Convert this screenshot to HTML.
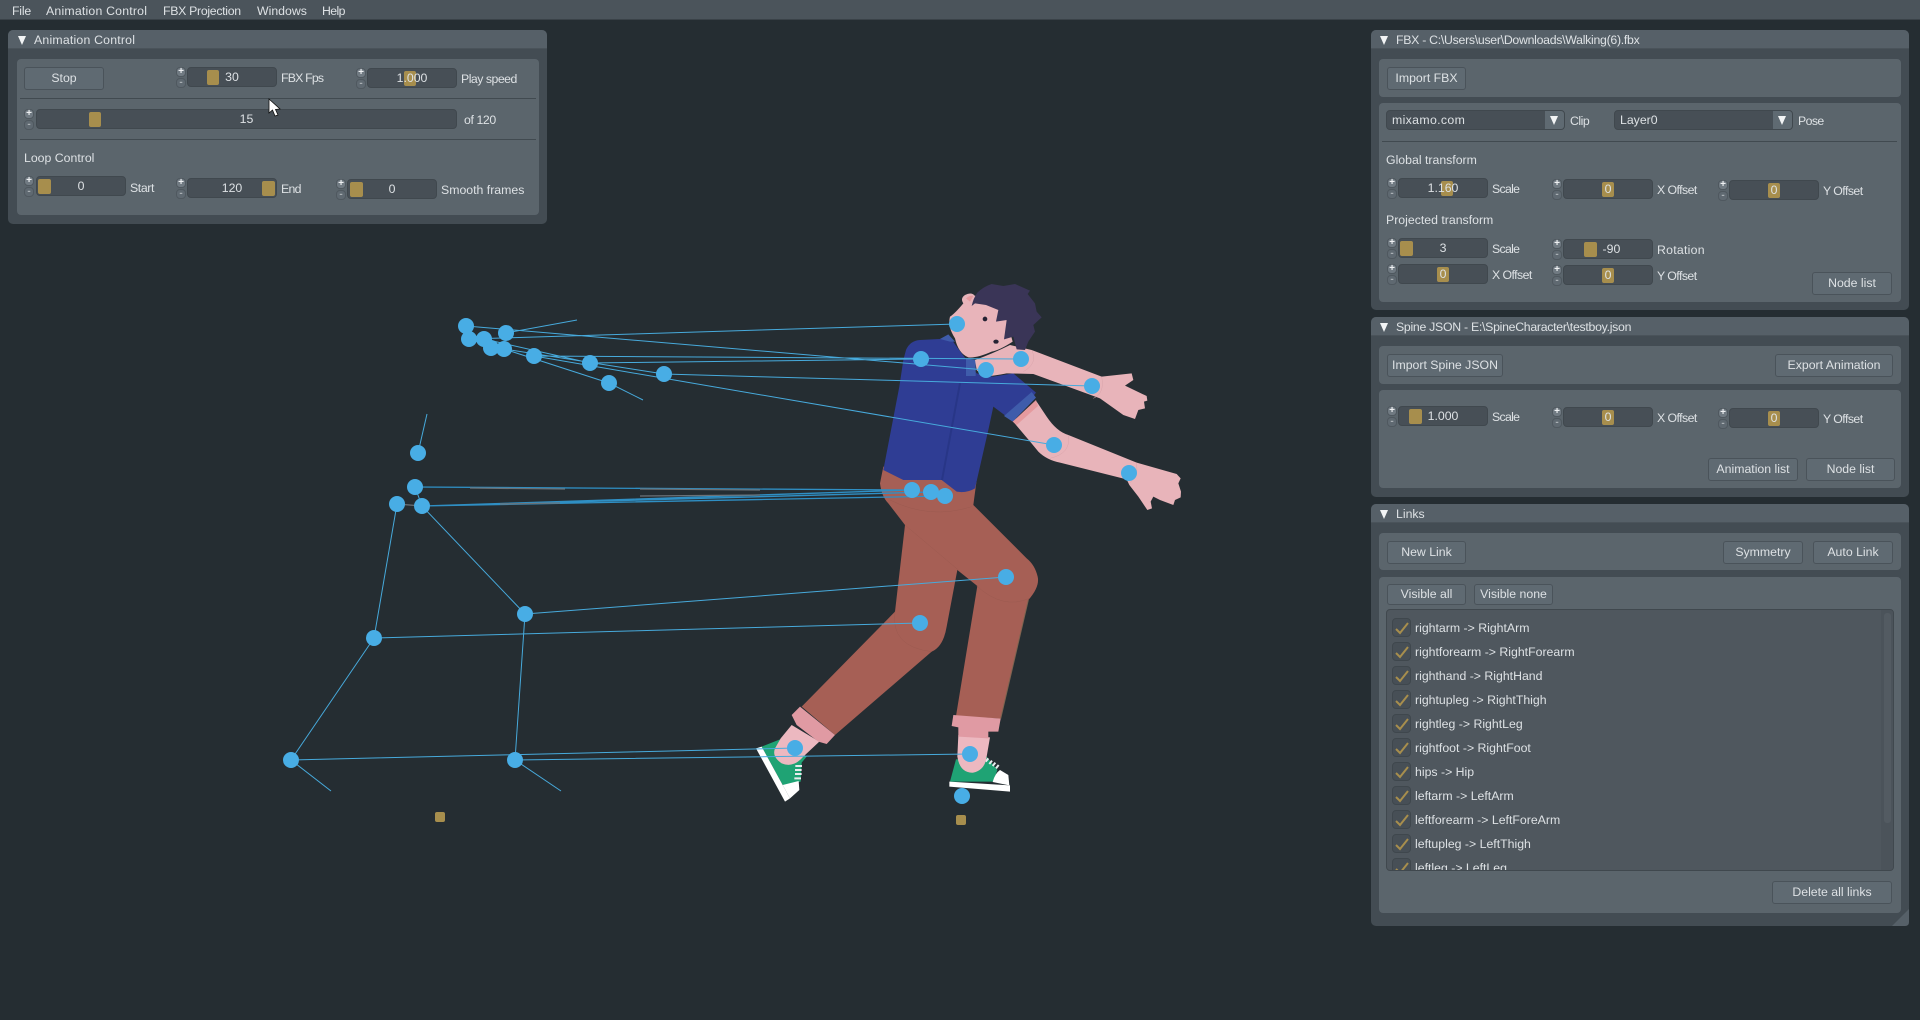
<!DOCTYPE html>
<html><head><meta charset="utf-8"><title>Animation Tool</title>
<style>
html,body{margin:0;padding:0;width:1920px;height:1020px;overflow:hidden;background:#252d32;font-family:"Liberation Sans",sans-serif;font-size:12.3px;color:#dde1e4}
#root{position:absolute;left:0;top:0;width:1920px;height:1020px;overflow:hidden;filter:blur(.35px)}
svg.scene{position:absolute;left:0;top:0}
.a{position:absolute}
.menu{left:0;top:0;width:1920px;height:20px;background:#4b545b;border-bottom:1px solid #3a4248;box-sizing:border-box}
.m{position:absolute;top:3px;line-height:16px;white-space:nowrap}
.win{position:absolute;background:#434c53;border-radius:5px}
.tb{position:absolute;left:0;top:0;right:0;height:19px;background:#566068;border-radius:5px 5px 0 0;border-bottom:1px solid #4a535a;box-sizing:border-box}
.tb span{position:absolute;top:2px;line-height:16px;white-space:nowrap}
.tri{position:absolute;width:0;height:0;border-left:4.7px solid transparent;border-right:4.7px solid transparent;border-top:9px solid #f2f4f5}
.grp{position:absolute;background:#5b656c;border-radius:4px}
.b{position:absolute;box-sizing:border-box;background:#5f6a72;border:1px solid #4a535a;border-radius:3px;text-align:center;line-height:21px;height:23px;white-space:nowrap}
.sp{position:absolute;width:101px;height:20px}
.sp i{position:absolute;left:0;width:10px;height:10px;box-sizing:border-box;background:#707a82;border:1px solid #4f585f;border-radius:4px;font:bold 10px/8px "Liberation Sans",sans-serif;text-align:center;color:#eef0f2}
.sp i.pl{top:0}.sp i.mi{top:11px;background:#5f6971;color:#a9afb4}
.fd{position:absolute;left:11px;top:0;width:90px;height:20px;box-sizing:border-box;background:#474f56;border:1px solid #40484e;border-radius:4px;text-align:center;line-height:18px}
.fd b{position:absolute;top:2px;width:12px;height:15px;background:#a78e4d;border-radius:2px}
.fd span{position:relative}
.l{position:absolute;line-height:16px;white-space:nowrap}
.sep{position:absolute;height:1px;background:#414a50}
.cb{position:absolute;left:5px;width:19px;height:19px;box-sizing:border-box;background:#474f56;border:1px solid #3f474d;border-radius:4px}
.cb svg{position:absolute;left:1px;top:1px}
.r{position:absolute;left:28px;line-height:16px;white-space:nowrap}
</style></head><body><div id="root">

<svg class="scene" width="1920" height="1020" viewBox="0 0 1920 1020">
 <!-- character lower body -->
 <g transform="translate(740 480) scale(.33333)">
  <path fill="#a65f55" d="M430,-40 L420,10 Q425,50 445,70 L495,135 L465,395 L185,680 L285,765 L575,515 Q610,500 620,440 L652,270 L712,318 L648,708 L782,716 L865,360 Q900,320 893,290 Q885,255 860,235 L700,75 L710,0 L705,-40Z"/>
  <path fill="none" stroke="#9c5a50" stroke-width="1.5" d="M450,60 Q570,120 695,80 M495,135 L655,270 M710,318 Q790,390 868,355 M465,395 Q450,500 575,515"/>
  <path fill="none" stroke="#7e6450" stroke-width="3" d="M865,360 L782,716"/>
  <path fill="#1fa374" d="M65,800 L120,778 L200,830 L185,848 L182,905 L130,918Z"/>
  <path fill="#fff" d="M48,805 L65,800 L150,955 L135,965Z"/>
  <path fill="#fff" d="M128,915 L176,903 L178,930 L150,955Z"/>
  <path stroke="#e8ecee" stroke-width="6" d="M166,858h20M165,870h20M165,882h20M163,895h20"/>
  <path fill="#ecb8c0" d="M122,775 L155,735 L238,785 L190,830 Q160,865 125,850 Q95,830 105,805Z"/>
  <path fill="#e09aa3" d="M155,705 L180,680 L285,765 L260,792 L235,785 L170,735Z"/>
  <path fill="#1fa374" d="M648,838 L740,830 L772,870 L760,905 L630,905Z"/>
  <path fill="#fff" d="M628,905 L810,916 L810,935 L628,920Z"/>
  <path fill="#fff" d="M758,906 Q765,880 780,870 L805,885 L808,916Z"/>
  <path stroke="#e8ecee" stroke-width="6" d="M737,845l8,-10M748,852l8,-10M758,858l8,-10M768,865l8,-10"/>
  <path fill="#ecb8c0" d="M655,765 L750,772 L740,830 Q735,870 700,878 Q660,880 652,830Z"/>
  <path fill="#e09aa3" d="M640,705 L782,716 L775,755 L745,755 L745,775 L655,770 L655,742 L635,738Z"/>
 </g>
 <!-- character upper body -->
 <g transform="translate(860 270) scale(.33333)">
  <path fill="#e8b4ba" d="M462,458 L530,395 L560,440 Q590,485 625,495 L830,578 L950,612 L962,625 L955,640 L963,665 L962,682 L945,690 L940,705 L900,690 L880,680 L872,695 L876,715 L862,720 L835,680 L808,645 L800,628 L600,578 Q560,570 535,545 Q515,520 462,458Z"/>
  <path fill="#2f3d94" d="M138,240 Q150,212 180,210 L240,207 L265,195 L290,230 L350,310 L400,320 L460,310 L528,368 L460,455 L400,410 L385,480 L345,655 Q320,670 290,665 L245,630 L130,630 L70,600 L95,470 L118,350 L130,270Z"/>
  <path fill="#3f5cab" d="M432,438 L515,366 L528,383 L458,455Z"/>
  <path fill="#e59a9e" d="M458,455 L528,390 L534,408 L470,465Z"/>
  <path fill="none" stroke="#283687" stroke-width="6" d="M300,340 L246,630"/>
  <path fill="#3f5cab" d="M318,265 L347,270 L347,318 L318,318Z"/>
  <path fill="#3f5cab" d="M240,207 L265,193 L285,215 L270,215Z"/>
  <path fill="#e8b4ba" d="M345,270 Q400,250 450,225 L515,240 L725,320 L815,310 L820,330 L795,347 L860,378 L862,392 L852,395 L855,415 L835,420 L825,447 L790,435 L720,385 L520,312 L440,310 Q400,318 370,320 L350,300Z"/>
  <path fill="#e8b4ba" d="M270,140 Q285,130 310,100 Q300,85 315,75 Q335,65 345,78 Q370,60 400,60 L440,150 L458,215 Q420,240 395,245 Q350,265 325,262 Q295,250 285,205 Q262,170 270,140Z"/>
  <path fill="#e59a9e" d="M318,85 Q330,75 340,78 L330,95Z"/>
  <path fill="#3a3557" d="M335,108 Q340,85 352,68 Q370,50 395,42 L430,48 L465,42 L510,62 L503,72 L525,100 L530,125 L545,142 L520,165 L525,185 L505,215 L495,240 L470,238 L460,200 L432,208 L440,150 L408,155 L415,120 L378,105 L345,100Z"/>
  <ellipse cx="375" cy="147" rx="7" ry="7" fill="#252233"/>
  <ellipse cx="408" cy="215" rx="8" ry="6" fill="#252233"/>
  <path fill="none" stroke="#d9a4ab" stroke-width="1.5" d="M515,240 Q535,280 490,305 M625,495 Q635,550 570,565 M725,320 Q735,370 700,385 M830,578 Q835,620 810,638"/>
 </g>
 <!-- skeleton lines -->
 <g stroke="#47aadc" stroke-width="1" fill="none">
  <path d="M418,453L427,414M422,506L525,614M397,504L374,638M374,638L291,760M525,614L515,760M291,760L331,791M515,760L561,791M415,487L422,506"/>
  <path d="M374,638L920,623M525,614L1006,577M291,760L795,748M515,760L970,754"/>
  <path d="M466,326L986,370M469,339L957,324M506,333L577,320M534,356L1021,359M590,363L921,359M664,374L1092,386M534,356L1054,445M504,349L664,374M504,349L609,383M609,383L643,400M484,339L590,363"/>
  <path stroke-width="1.3" stroke="#2f8fc4" d="M415,487L912,490M422,506L912,490M422,506L945,496M422,506L931,492"/>
 </g>
 <path stroke="#6b7278" stroke-width="1.3" d="M397,504L422,506M470,488L565,489M640,489L760,490M500,504L560,503M640,496L760,495"/>
 <!-- joints -->
 <g fill="#48ade5">
  <circle cx="466" cy="326" r="8"/><circle cx="469" cy="339" r="8"/><circle cx="484" cy="339" r="8"/><circle cx="491" cy="348" r="8"/><circle cx="504" cy="349" r="8"/><circle cx="506" cy="333" r="8"/><circle cx="534" cy="356" r="8"/><circle cx="590" cy="363" r="8"/><circle cx="609" cy="383" r="8"/><circle cx="664" cy="374" r="8"/>
  <circle cx="957" cy="324" r="8"/><circle cx="921" cy="359" r="8"/><circle cx="1021" cy="359" r="8"/><circle cx="986" cy="370" r="8"/><circle cx="1092" cy="386" r="8"/><circle cx="1054" cy="445" r="8"/><circle cx="1129" cy="473" r="8"/><circle cx="912" cy="490" r="8"/><circle cx="931" cy="492" r="8"/><circle cx="945" cy="496" r="8"/>
  <circle cx="1006" cy="577" r="8"/><circle cx="920" cy="623" r="8"/><circle cx="795" cy="748" r="8"/><circle cx="970" cy="754" r="8"/><circle cx="962" cy="796" r="8"/>
  <circle cx="418" cy="453" r="8"/><circle cx="415" cy="487" r="8"/><circle cx="397" cy="504" r="8"/><circle cx="422" cy="506" r="8"/><circle cx="525" cy="614" r="8"/><circle cx="374" cy="638" r="8"/><circle cx="291" cy="760" r="8"/><circle cx="515" cy="760" r="8"/>
 </g>
 <rect x="435" y="812" width="10" height="10" rx="2" fill="#a78e4d"/>
 <rect x="956" y="815" width="10" height="10" rx="2" fill="#a78e4d"/>
</svg>

<div class="a menu">
 <span class="m" style="left:12px;letter-spacing:-.2px">File</span><span class="m" style="left:46px;letter-spacing:.2px">Animation Control</span><span class="m" style="left:163px;letter-spacing:-.3px">FBX Projection</span><span class="m" style="left:257px">Windows</span><span class="m" style="left:322px;letter-spacing:-.6px">Help</span>
</div>

<!-- Animation Control -->
<div class="win" style="left:8px;top:30px;width:539px;height:194px"><div class="tb"><span style="left:26px;letter-spacing:.2px">Animation Control</span></div><div class="tri" style="left:10px;top:6px"></div></div>
<div class="grp" style="left:17px;top:59px;width:522px;height:156px"></div>
<div class="b" style="left:24px;top:67px;width:80px">Stop</div>
<div class="sp" style="left:176px;top:67px"><i class="pl">+</i><i class="mi">-</i><div class="fd"><b style="left:19px"></b><span>30</span></div></div>
<div class="l" style="left:281px;top:70px;letter-spacing:-.8px">FBX Fps</div>
<div class="sp" style="left:356px;top:68px"><i class="pl">+</i><i class="mi">-</i><div class="fd"><b style="left:36px"></b><span>1.000</span></div></div>
<div class="l" style="left:461px;top:71px;letter-spacing:-.5px">Play speed</div>
<div class="sep" style="left:20px;top:98px;width:516px"></div>
<div class="sp" style="left:24px;top:109px;width:433px"><i class="pl">+</i><i class="mi">-</i><div class="fd" style="left:12px;width:421px"><b style="left:52px"></b><span>15</span></div></div>
<div class="l" style="left:464px;top:112px;letter-spacing:-.4px">of 120</div>
<div class="sep" style="left:20px;top:139px;width:516px"></div>
<div class="l" style="left:24px;top:150px">Loop Control</div>
<div class="sp" style="left:24px;top:176px;width:102px"><i class="pl">+</i><i class="mi">-</i><div class="fd" style="left:12px"><b style="left:1px;width:13px"></b><span>0</span></div></div>
<div class="l" style="left:130px;top:180px;letter-spacing:-.4px">Start</div>
<div class="sp" style="left:176px;top:178px"><i class="pl">+</i><i class="mi">-</i><div class="fd"><b style="left:74px;width:13px"></b><span>120</span></div></div>
<div class="l" style="left:281px;top:181px;letter-spacing:-.7px">End</div>
<div class="sp" style="left:336px;top:179px"><i class="pl">+</i><i class="mi">-</i><div class="fd"><b style="left:2px;width:13px"></b><span>0</span></div></div>
<div class="l" style="left:441px;top:182px">Smooth frames</div>

<!-- FBX -->
<div class="win" style="left:1371px;top:30px;width:538px;height:280px"><div class="tb"><span style="left:25px;letter-spacing:-.28px">FBX - C:\Users\user\Downloads\Walking(6).fbx</span></div><div class="tri" style="left:9px;top:6px"></div></div>
<div class="grp" style="left:1379px;top:59px;width:522px;height:38px"></div>
<div class="grp" style="left:1379px;top:103px;width:522px;height:199px"></div>
<div class="b" style="left:1387px;top:67px;width:79px">Import FBX</div>
<div class="fd" style="left:1386px;top:110px;width:179px;text-align:left;padding-left:5px"><span style="letter-spacing:.35px">mixamo.com</span><div class="a" style="right:0;top:0;width:19px;height:18px;background:#5f6a72;border-radius:0 3px 3px 0"></div><div class="tri" style="left:163px;top:5px"></div></div>
<div class="l" style="left:1570px;top:113px;letter-spacing:-.5px">Clip</div>
<div class="fd" style="left:1614px;top:110px;width:179px;text-align:left;padding-left:5px"><span>Layer0</span><div class="a" style="right:0;top:0;width:19px;height:18px;background:#5f6a72;border-radius:0 3px 3px 0"></div><div class="tri" style="left:163px;top:5px"></div></div>
<div class="l" style="left:1798px;top:113px;letter-spacing:-.6px">Pose</div>
<div class="sep" style="left:1382px;top:141px;width:515px"></div>
<div class="l" style="left:1386px;top:152px">Global transform</div>
<div class="sp" style="left:1387px;top:178px"><i class="pl">+</i><i class="mi">-</i><div class="fd"><b style="left:42px"></b><span>1.160</span></div></div>
<div class="l" style="left:1492px;top:181px;letter-spacing:-.7px">Scale</div>
<div class="sp" style="left:1552px;top:179px"><i class="pl">+</i><i class="mi">-</i><div class="fd"><b style="left:38px"></b><span>0</span></div></div>
<div class="l" style="left:1657px;top:182px;letter-spacing:-.55px">X Offset</div>
<div class="sp" style="left:1718px;top:180px"><i class="pl">+</i><i class="mi">-</i><div class="fd"><b style="left:38px"></b><span>0</span></div></div>
<div class="l" style="left:1823px;top:183px;letter-spacing:-.55px">Y Offset</div>
<div class="l" style="left:1386px;top:212px">Projected transform</div>
<div class="sp" style="left:1387px;top:238px"><i class="pl">+</i><i class="mi">-</i><div class="fd"><b style="left:1px;width:13px"></b><span>3</span></div></div>
<div class="l" style="left:1492px;top:241px;letter-spacing:-.7px">Scale</div>
<div class="sp" style="left:1552px;top:239px"><i class="pl">+</i><i class="mi">-</i><div class="fd"><b style="left:20px;width:13px"></b><span>&#160;&#160;-90</span></div></div>
<div class="l" style="left:1657px;top:242px;letter-spacing:.25px">Rotation</div>
<div class="sp" style="left:1387px;top:264px"><i class="pl">+</i><i class="mi">-</i><div class="fd"><b style="left:38px"></b><span>0</span></div></div>
<div class="l" style="left:1492px;top:267px;letter-spacing:-.55px">X Offset</div>
<div class="sp" style="left:1552px;top:265px"><i class="pl">+</i><i class="mi">-</i><div class="fd"><b style="left:38px"></b><span>0</span></div></div>
<div class="l" style="left:1657px;top:268px;letter-spacing:-.55px">Y Offset</div>
<div class="b" style="left:1812px;top:272px;width:80px">Node list</div>

<!-- Spine -->
<div class="win" style="left:1371px;top:317px;width:538px;height:180px"><div class="tb"><span style="left:25px;letter-spacing:-.28px">Spine JSON - E:\SpineCharacter\testboy.json</span></div><div class="tri" style="left:9px;top:6px"></div></div>
<div class="grp" style="left:1379px;top:346px;width:522px;height:38px"></div>
<div class="grp" style="left:1379px;top:390px;width:522px;height:98px"></div>
<div class="b" style="left:1387px;top:354px;width:116px">Import Spine JSON</div>
<div class="b" style="left:1775px;top:354px;width:118px">Export Animation</div>
<div class="sp" style="left:1387px;top:406px"><i class="pl">+</i><i class="mi">-</i><div class="fd"><b style="left:10px;width:13px"></b><span>1.000</span></div></div>
<div class="l" style="left:1492px;top:409px;letter-spacing:-.7px">Scale</div>
<div class="sp" style="left:1552px;top:407px"><i class="pl">+</i><i class="mi">-</i><div class="fd"><b style="left:38px"></b><span>0</span></div></div>
<div class="l" style="left:1657px;top:410px;letter-spacing:-.55px">X Offset</div>
<div class="sp" style="left:1718px;top:408px"><i class="pl">+</i><i class="mi">-</i><div class="fd"><b style="left:38px"></b><span>0</span></div></div>
<div class="l" style="left:1823px;top:411px;letter-spacing:-.55px">Y Offset</div>
<div class="b" style="left:1708px;top:458px;width:90px">Animation list</div>
<div class="b" style="left:1806px;top:458px;width:89px">Node list</div>

<!-- Links -->
<div class="win" style="left:1371px;top:504px;width:538px;height:422px"><div class="tb"><span style="left:25px">Links</span></div><div class="tri" style="left:9px;top:6px"></div></div>
<div class="grp" style="left:1379px;top:533px;width:522px;height:37px"></div>
<div class="grp" style="left:1379px;top:577px;width:522px;height:336px"></div>
<div class="b" style="left:1387px;top:541px;width:79px">New Link</div>
<div class="b" style="left:1723px;top:541px;width:80px">Symmetry</div>
<div class="b" style="left:1813px;top:541px;width:80px">Auto Link</div>
<div class="b" style="left:1387px;top:584px;width:79px;height:21px;line-height:19px">Visible all</div>
<div class="b" style="left:1474px;top:584px;width:79px;height:21px;line-height:19px">Visible none</div>
<div class="a" style="left:1386px;top:609px;width:508px;height:262px;background:#4f575e;border:1px solid #40484e;box-sizing:border-box;border-radius:4px;overflow:hidden">
 <div class="a" style="right:0;top:0;width:12px;height:262px;background:#4b535a"></div>
 <div class="a" style="right:2px;top:3px;width:7px;height:210px;background:#535b62;border-radius:3px"></div>
 <div class="cb" style="top:8px"><svg width="16" height="16"><path d="M2,9L6,13L14,3" fill="none" stroke="#a78e4d" stroke-width="2"/></svg></div><div class="r" style="top:10px">rightarm -&gt; RightArm</div>
 <div class="cb" style="top:32px"><svg width="16" height="16"><path d="M2,9L6,13L14,3" fill="none" stroke="#a78e4d" stroke-width="2"/></svg></div><div class="r" style="top:34px">rightforearm -&gt; RightForearm</div>
 <div class="cb" style="top:56px"><svg width="16" height="16"><path d="M2,9L6,13L14,3" fill="none" stroke="#a78e4d" stroke-width="2"/></svg></div><div class="r" style="top:58px">righthand -&gt; RightHand</div>
 <div class="cb" style="top:80px"><svg width="16" height="16"><path d="M2,9L6,13L14,3" fill="none" stroke="#a78e4d" stroke-width="2"/></svg></div><div class="r" style="top:82px">rightupleg -&gt; RightThigh</div>
 <div class="cb" style="top:104px"><svg width="16" height="16"><path d="M2,9L6,13L14,3" fill="none" stroke="#a78e4d" stroke-width="2"/></svg></div><div class="r" style="top:106px">rightleg -&gt; RightLeg</div>
 <div class="cb" style="top:128px"><svg width="16" height="16"><path d="M2,9L6,13L14,3" fill="none" stroke="#a78e4d" stroke-width="2"/></svg></div><div class="r" style="top:130px">rightfoot -&gt; RightFoot</div>
 <div class="cb" style="top:152px"><svg width="16" height="16"><path d="M2,9L6,13L14,3" fill="none" stroke="#a78e4d" stroke-width="2"/></svg></div><div class="r" style="top:154px">hips -&gt; Hip</div>
 <div class="cb" style="top:176px"><svg width="16" height="16"><path d="M2,9L6,13L14,3" fill="none" stroke="#a78e4d" stroke-width="2"/></svg></div><div class="r" style="top:178px">leftarm -&gt; LeftArm</div>
 <div class="cb" style="top:200px"><svg width="16" height="16"><path d="M2,9L6,13L14,3" fill="none" stroke="#a78e4d" stroke-width="2"/></svg></div><div class="r" style="top:202px">leftforearm -&gt; LeftForeArm</div>
 <div class="cb" style="top:224px"><svg width="16" height="16"><path d="M2,9L6,13L14,3" fill="none" stroke="#a78e4d" stroke-width="2"/></svg></div><div class="r" style="top:226px">leftupleg -&gt; LeftThigh</div>
 <div class="cb" style="top:248px"><svg width="16" height="16"><path d="M2,9L6,13L14,3" fill="none" stroke="#a78e4d" stroke-width="2"/></svg></div><div class="r" style="top:250px">leftleg -&gt; LeftLeg</div>
</div>
<div class="b" style="left:1772px;top:881px;width:120px">Delete all links</div>
<svg class="a" style="left:1892px;top:909px" width="17" height="17"><path d="M17,0V13Q17,17 13,17H0Z" fill="#566068"/></svg>

<!-- cursor -->
<svg class="a" style="left:268px;top:98px" width="14" height="20"><path d="M1,1V15L4.5,12L7,18L10,17L7.5,11.5L12,11Z" fill="#fff" stroke="#111" stroke-width=".8"/></svg>
</div></body></html>
